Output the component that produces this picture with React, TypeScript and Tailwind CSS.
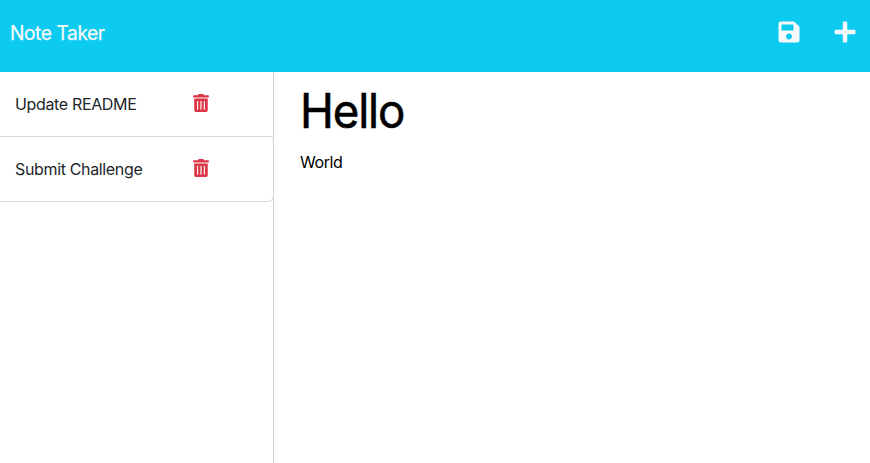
import { FaPlus, FaSave, FaTrashAlt } from "react-icons/fa";

const notes = ["Update README", "Submit Challenge"];

export default function App() {
  return (
    <div className="flex h-screen flex-col overflow-hidden bg-white font-['Inter',sans-serif]">
      <header className="flex h-[72px] shrink-0 items-start justify-between bg-[#0dcaf0] pl-[10px] pr-[13.5px] text-[#f8f9fa]">
        <span className="-ml-[0.5px] mt-[18px] origin-left scale-x-[0.96] text-[20px] leading-[30px] tracking-[-0.45px] [-webkit-text-stroke:0.25px]">Note Taker</span>
        <div className="mt-5 flex items-center gap-[31.5px]">
          <FaSave className="h-6 w-6" />
          <FaPlus className="h-6 w-6" />
        </div>
      </header>
      <main className="flex min-h-0 flex-1">
        <ul className="w-[274px] shrink-0 border-r border-[#d0d0d0]">
          {notes.map((n) => (
            <li key={n} className="-mr-px flex h-[65px] items-center border-b border-r border-b-[#dadada] border-r-[#d0d0d0] pl-[15px] text-[#212529] last:rounded-br-md">
              <span className="w-[178px] text-[16px] leading-6 tracking-[-0.35px]">{n}</span>
              <FaTrashAlt className="mb-[1.5px] h-[18px] w-4 text-[#dc3545]" />
            </li>
          ))}
        </ul>
        <section className="pl-[26px] text-black">
          <h1 className="mt-[10px] origin-left scale-x-[0.95] text-[48px] leading-[58px] tracking-[-1.2px] [-webkit-text-stroke:0.6px]">Hello</h1>
          <p className="mt-[10px] text-[16px] leading-6 tracking-[-0.4px]">World</p>
        </section>
      </main>
    </div>
  );
}
